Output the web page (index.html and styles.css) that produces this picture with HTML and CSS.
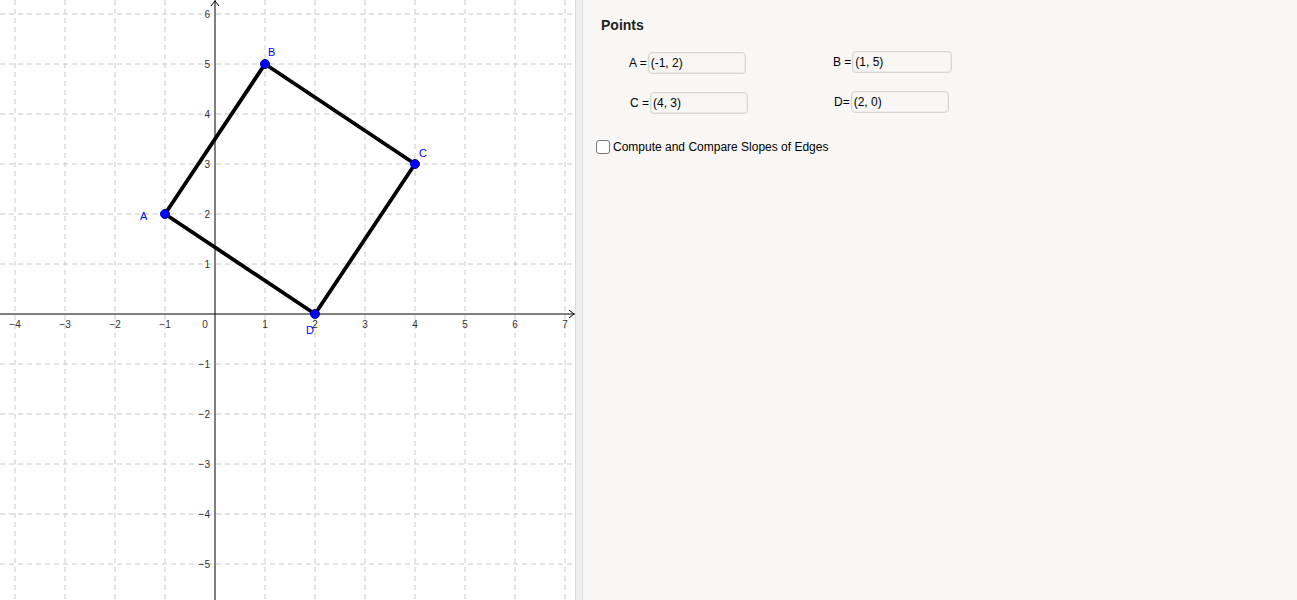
FILE: index.html
```html
<!DOCTYPE html>
<html>
<head>
  <meta charset="UTF-8">
  <title>Points</title>
  <link rel="stylesheet" href="styles.css">
</head>
<body>
  <div class="app">
    <div class="graphics">
      <svg width="575" height="600" viewBox="0 0 575 600">
        <g class="grid">
          <line x1="15" y1="0" x2="15" y2="600"/>
          <line x1="65" y1="0" x2="65" y2="600"/>
          <line x1="115" y1="0" x2="115" y2="600"/>
          <line x1="165" y1="0" x2="165" y2="600"/>
          <line x1="265" y1="0" x2="265" y2="600"/>
          <line x1="315" y1="0" x2="315" y2="600"/>
          <line x1="365" y1="0" x2="365" y2="600"/>
          <line x1="415" y1="0" x2="415" y2="600"/>
          <line x1="465" y1="0" x2="465" y2="600"/>
          <line x1="515" y1="0" x2="515" y2="600"/>
          <line x1="565" y1="0" x2="565" y2="600"/>
          <line x1="0" y1="14" x2="575" y2="14"/>
          <line x1="0" y1="64" x2="575" y2="64"/>
          <line x1="0" y1="114" x2="575" y2="114"/>
          <line x1="0" y1="164" x2="575" y2="164"/>
          <line x1="0" y1="214" x2="575" y2="214"/>
          <line x1="0" y1="264" x2="575" y2="264"/>
          <line x1="0" y1="364" x2="575" y2="364"/>
          <line x1="0" y1="414" x2="575" y2="414"/>
          <line x1="0" y1="464" x2="575" y2="464"/>
          <line x1="0" y1="514" x2="575" y2="514"/>
          <line x1="0" y1="564" x2="575" y2="564"/>
        </g>
        <g class="axes">
          <line x1="0" y1="314" x2="575" y2="314"/>
          <line x1="215" y1="0" x2="215" y2="600"/>
          <polyline points="569,310 574,314 569,318"/>
          <polyline points="211,6 215,1 219,6"/>
        </g>
        <g class="ticks xt">
          <text x="15" y="328">−4</text>
          <text x="65" y="328">−3</text>
          <text x="115" y="328">−2</text>
          <text x="165" y="328">−1</text>
          <text x="205" y="328">0</text>
          <text x="265" y="328">1</text>
          <text x="315" y="328">2</text>
          <text x="365" y="328">3</text>
          <text x="415" y="328">4</text>
          <text x="465" y="328">5</text>
          <text x="515" y="328">6</text>
          <text x="565" y="328">7</text>
        </g>
        <g class="ticks yt">
          <text x="210" y="18">6</text>
          <text x="210" y="68">5</text>
          <text x="210" y="118">4</text>
          <text x="210" y="168">3</text>
          <text x="210" y="218">2</text>
          <text x="210" y="268">1</text>
          <text x="210" y="368">−1</text>
          <text x="210" y="418">−2</text>
          <text x="210" y="468">−3</text>
          <text x="210" y="518">−4</text>
          <text x="210" y="568">−5</text>
        </g>
        <polygon class="quad" points="165,214 265,64 415,164 315,314"/>
        <g class="pts">
          <circle cx="165" cy="214" r="4.5"/>
          <circle cx="265" cy="64" r="4.5"/>
          <circle cx="415" cy="164" r="4.5"/>
          <circle cx="315" cy="314" r="4.5"/>
        </g>
        <g class="plabels">
          <text x="140" y="220">A</text>
          <text x="268" y="56">B</text>
          <text x="419" y="157">C</text>
          <text x="306" y="334">D</text>
        </g>
      </svg>
    </div>
    <div class="splitter"></div>
    <div class="panel">
      <h2 class="title">Points</h2>
      <div class="point-grid">
        <div class="field f-a"><span>A =</span><div class="box">(-1, 2)</div></div>
        <div class="field f-b"><span>B =</span><div class="box wide">(1, 5)</div></div>
        <div class="field f-c"><span>C =</span><div class="box">(4, 3)</div></div>
        <div class="field f-d"><span>D=</span><div class="box">(2, 0)</div></div>
      </div>
      <label class="check"><span class="checkbox"></span>Compute and Compare Slopes of Edges</label>
    </div>
  </div>
</body>
</html>
```

FILE: styles.css
```css
body {
  margin: 0;
  font-family: "Liberation Sans", Arial, sans-serif;
  background: #fff;
}
.app {
  display: flex;
  height: 600px;
  overflow: hidden;
}
.graphics {
  width: 575px;
  flex: none;
  background: #fff;
}
.graphics svg {
  display: block;
}
.grid line {
  stroke: #c8c8c8;
  stroke-width: 1;
  stroke-dasharray: 5 4;
}
.axes line,
.axes polyline {
  stroke: #000;
  stroke-width: 1;
  fill: none;
}
.ticks text {
  font-size: 10px;
  fill: #333;
  font-family: "Liberation Sans", Arial, sans-serif;
}
.xt text {
  text-anchor: middle;
}
.yt text {
  text-anchor: end;
}
.quad {
  fill: none;
  stroke: #000;
  stroke-width: 3.8;
  stroke-linejoin: round;
}
.pts circle {
  fill: #0000ff;
  stroke: #00009a;
  stroke-width: 1;
}
.plabels text {
  fill: #0000ff;
  font-size: 11px;
  font-family: "Liberation Sans", Arial, sans-serif;
}
.splitter {
  width: 6px;
  flex: none;
  background: #f0f0f0;
  border-left: 1px solid #dcdcdc;
  border-right: 1px solid #dcdcdc;
}
.panel {
  flex: 1;
  background: #f8f7f6;
  padding: 17px 0 0 18px;
  font-size: 12px;
  color: #000;
}
.title {
  margin: 0;
  font-size: 14px;
  font-weight: bold;
  color: #222;
}
.point-grid {
  display: grid;
  grid-template-columns: 203px 203px;
  row-gap: 18px;
  margin-top: 19px;
}
.field {
  display: flex;
  align-items: center;
  gap: 1px;
}
.f-a { margin-left: 28px; }
.f-b { margin-left: 29px; margin-top: -2px; }
.f-c { margin-left: 29px; }
.f-d { margin-left: 30px; margin-top: -2px; }
.box {
  width: 94px;
  height: 20px;
  line-height: 20px;
  padding-left: 2px;
  border: 1px solid #d6d6d6;
  border-radius: 4px;
  background: #f8f7f6;
  box-shadow: inset 0 0 0 1px #ececec;
}
.box.wide {
  width: 96px;
}
.check {
  display: flex;
  align-items: center;
  gap: 3px;
  margin-top: 26px;
  margin-left: -5px;
}
.checkbox {
  width: 12px;
  height: 12px;
  border: 1px solid #777;
  border-radius: 3px;
  background: #fff;
}
```
